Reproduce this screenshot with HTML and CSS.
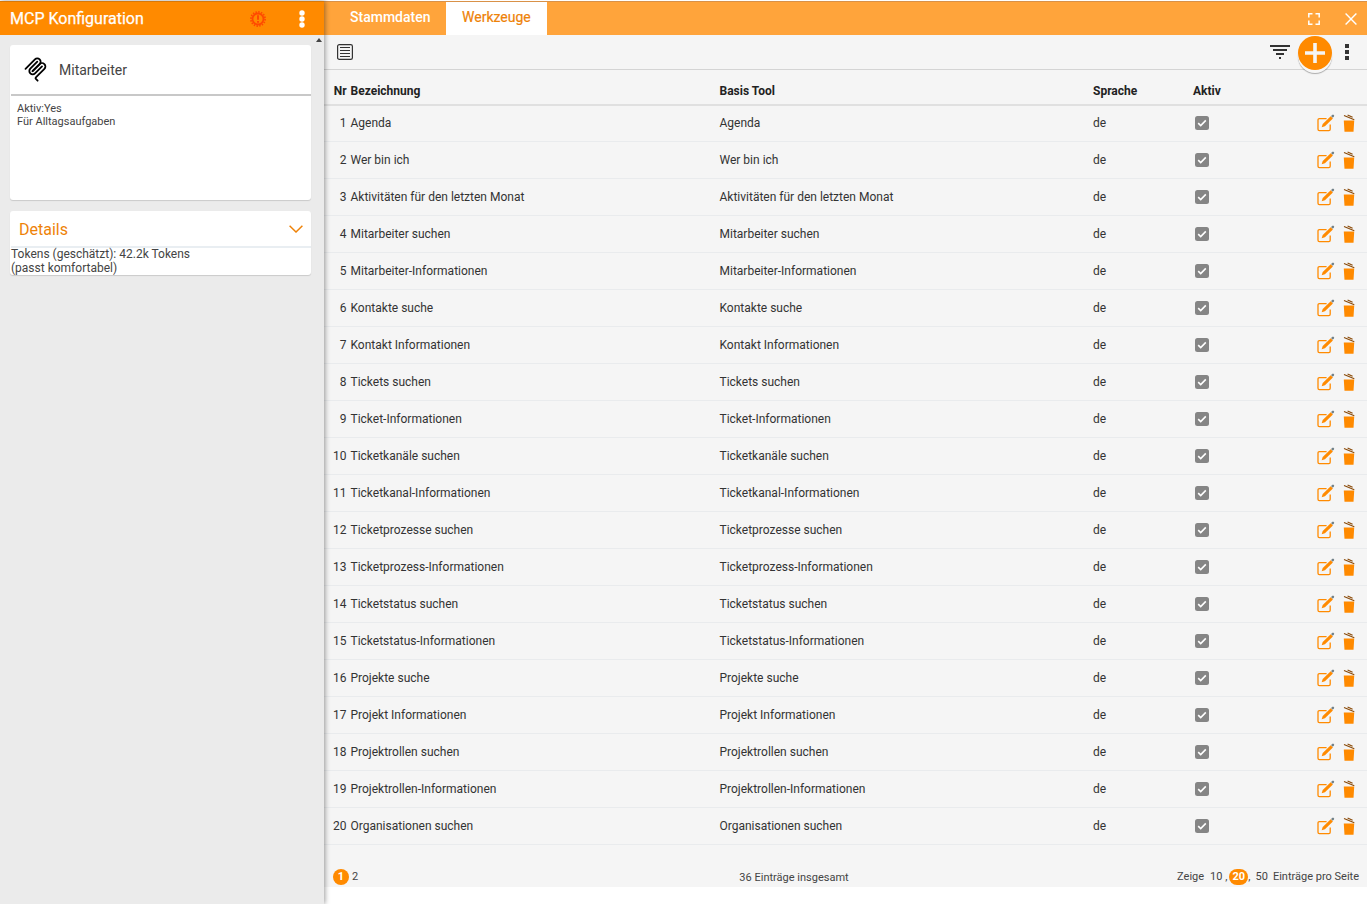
FILE: index.html
```html
<!DOCTYPE html>
<html lang="de">
<head>
<meta charset="utf-8">
<title>MCP Konfiguration</title>
<link rel="stylesheet" href="styles.css">
</head>
<body>
<svg class="defs" width="0" height="0">
  <symbol id="edit" viewBox="0 0 18 18">
    <path d="M9.6 4.6H2.4Q1 4.6 1 6v9.2q0 1.4 1.4 1.4h9.4q1.4 0 1.4-1.4V10.4" fill="none" stroke="#ff8a00" stroke-width="1.3"/>
    <path d="M4.7 13.2l1-3.2 8-7.7 2.2 2.2-8 7.7z" fill="#ff8a00"/>
    <path d="M14 2.1l1.2-1.2q.8-.6 1.6.1t.1 1.6l-1.2 1.2z" fill="#718087"/>
  </symbol>
  <symbol id="trash" viewBox="0 0 12 18">
    <path d="M.8 6.6h10.4l-.7 11.2h-9z" fill="#ff8a00"/>
    <path d="M1 1.4l10.3 4.4M4.6 1l5 2.2" fill="none" stroke="#8a4a08" stroke-width="1.1"/>
  </symbol>
  <symbol id="check" viewBox="0 0 14 14">
    <rect width="14" height="14" rx="2.5" fill="#858585"/>
    <path d="M3.2 7.2l2.5 2.4L10.8 4.4" fill="none" stroke="#fff" stroke-width="1.6"/>
  </symbol>
</svg>
<div class="app">
  <aside class="sidebar">
    <header class="side-head">
      <h1>MCP Konfiguration</h1>
      <svg class="alert" viewBox="0 0 16 16"><circle cx="8" cy="8" r="7.1" fill="none" stroke="#ff4a00" stroke-width="1.7" stroke-dasharray="1.5 1.288"/><circle cx="8" cy="8" r="5.5" fill="none" stroke="#ff4a00" stroke-width="1.8"/><path d="M8 4.2v4.6M8 10v1.7" stroke="#ff4a00" stroke-width="2"/></svg>
      <svg class="menu" viewBox="0 0 6 18" fill="#fff"><circle cx="3" cy="3" r="2.7"/><circle cx="3" cy="9" r="2.7"/><circle cx="3" cy="15" r="2.7"/></svg>
    </header>
    <div class="scroll-up"></div>
    <section class="card person">
      <div class="person-head">
        <svg viewBox="0 0 180 180" fill="none" stroke="#000" stroke-width="13" stroke-linecap="round"><path d="M18 84.85L85.88 16.97c9.37-9.37 24.57-9.37 33.94 0s9.37 24.57 0 33.94L68.56 102.18"/><path d="M69.27 101.47l50.55-50.56c9.37-9.37 24.57-9.37 33.94 0l.36.36c9.37 9.37 9.37 24.57 0 33.94L92.72 146.6c-3.12 3.12-3.12 8.19 0 11.31l12.61 12.61"/><path d="M102.85 33.94l-50.2 50.21c-9.37 9.37-9.37 24.56 0 33.94s24.57 9.37 33.94 0l50.2-50.21"/></svg>
        <span>Mitarbeiter</span>
      </div>
      <p class="person-text">Aktiv:Yes<br>Für Alltagsaufgaben</p>
    </section>
    <section class="card details">
      <div class="details-head"><h2>Details</h2>
        <svg viewBox="0 0 14 8" fill="none" stroke="#ee8208" stroke-width="1.5"><path d="M.6.8L7 7 13.4.8"/></svg>
      </div>
      <p class="details-text">Tokens (geschätzt): 42.2k Tokens<br>(passt komfortabel)</p>
    </section>
  </aside>
  <main class="main">
    <nav class="tabs">
      <span class="tab">Stammdaten</span><span class="tab active">Werkzeuge</span>
      <svg class="full" viewBox="0 0 12 12" fill="none" stroke="#fff" stroke-width="1.5"><path d="M.8 4.5V.8h3.7M7.5.8h3.7v3.7M11.2 7.5v3.7H7.5M4.5 11.2H.8V7.5"/></svg>
      <svg class="close" viewBox="0 0 12 12" stroke="#fff" stroke-width="1.4"><path d="M.6.6l10.8 10.8M11.4.6L.6 11.4"/></svg>
    </nav>
    <div class="toolbar">
      <svg class="list" viewBox="0 0 16 16" fill="none" stroke="#333"><rect x=".6" y=".6" width="14.8" height="14.8" rx="1.7" stroke-width="1.2"/><path d="M3 3.5h10M3 6.5h10M3 9.5h10M3 12.5h10"/></svg>
      <svg class="filter" viewBox="0 0 20 14" fill="#333"><path d="M0 0h20v2H0zM3 4h14v2H3zM6 8h8v2H6zM9 12h2v2H9z"/></svg>
      <button class="add"><svg viewBox="0 0 20 20"><path d="M8.2 0h3.6v8.2H20v3.6h-8.2V20H8.2v-8.2H0V8.2h8.2z" fill="#f5f5f5"/></svg></button>
      <svg class="more" viewBox="0 0 4 16" fill="#333"><path d="M0 0h4v4H0zM0 6h4v4H0zM0 12h4v4H0z"/></svg>
    </div>
    <div class="row head"><span class="nr">Nr</span><span>Bezeichnung</span><span>Basis Tool</span><span>Sprache</span><span>Aktiv</span></div>
    <div id="rows"></div>
    <footer class="footer">
      <div class="pages"><b class="dot">1</b><span class="page">2</span></div>
      <div class="total">36 Einträge insgesamt</div>
      <div class="sizes"><span class="show">Zeige</span><span class="ten">10 ,</span><b class="dot wide">20</b><span class="comma">,</span><span class="fifty">50</span><span>Einträge pro Seite</span></div>
    </footer>
  </main>
</div>
<script src="rows.js"></script>
</body>
</html>
```
FILE: rows.js
```js
const tools = ["Agenda", "Wer bin ich", "Aktivitäten für den letzten Monat", "Mitarbeiter suchen", "Mitarbeiter-Informationen", "Kontakte suche", "Kontakt Informationen", "Tickets suchen", "Ticket-Informationen", "Ticketkanäle suchen", "Ticketkanal-Informationen", "Ticketprozesse suchen", "Ticketprozess-Informationen", "Ticketstatus suchen", "Ticketstatus-Informationen", "Projekte suche", "Projekt Informationen", "Projektrollen suchen", "Projektrollen-Informationen", "Organisationen suchen"];
document.getElementById("rows").innerHTML = tools.map((name, i) =>
  `<div class="row"><span class="nr">${i + 1}</span><span>${name}</span><span>${name}</span><span>de</span>` +
  `<svg class="check"><use href="#check"/></svg><svg class="edit"><use href="#edit"/></svg><svg class="trash"><use href="#trash"/></svg></div>`
).join("");
```
FILE: styles.css
```css
* { box-sizing: border-box; }
body { margin: 0; background: #fff; font-family: Roboto, "Liberation Sans", sans-serif; font-size: 12px; color: #333; overflow: hidden; }
h1, h2, p { margin: 0; font-weight: 400; }
svg { display: block; flex: none; }
.defs { position: absolute; }
.app { display: flex; height: 904px; padding-top: 1px; }
.sidebar { width: 324px; flex: none; background: #ebebeb; box-shadow: 1px 0 5px rgba(0,0,0,.4); position: relative; z-index: 1; }
.side-head { height: 34px; background: #ff8a00; border-top: 1px solid #d87808; display: flex; align-items: center; padding: 0 19px 0 10px; color: #fff; }
.side-head h1 { font-size: 16px; flex: 1; -webkit-text-stroke: .25px #fff; }
.alert { width: 16px; height: 16px; margin: 1px 33px 0 0; }
.menu { width: 6px; height: 18px; margin-top: 1px; }
.scroll-up { position: absolute; left: 316px; top: 37px; border: 3px solid transparent; border-top: 0; border-bottom: 4px solid #444; }
.card { width: 301px; margin: 10px 0 0 10px; background: #fff; border-radius: 3px; box-shadow: 0 1px 1px rgba(0,0,0,.14); }
.person { height: 155px; }
.person-head { height: 51px; margin-left: 1px; border-bottom: 2px solid #c8c8c8; display: flex; align-items: center; padding-left: 12px; gap: 11px; font-size: 14px; color: #444; }
.person-head svg { width: 25px; height: 25px; }
.person-text { padding: 6px 7px; font-size: 11px; line-height: 13px; color: #444; }
.details { height: 64px; margin-top: 11px; }
.details-head { height: 37px; border-bottom: 2px solid #e9eef2; margin-left: 1px; padding: 0 8px; display: flex; justify-content: space-between; align-items: center; }
.details-head h2 { font-size: 16px; color: #ee8208; padding-top: 2px; }
.details-head svg { width: 14px; height: 8px; }
.details-text { padding-left: 1px; margin-top: -1px; line-height: 14px; color: #444; }
.main { flex: 1; min-width: 0; height: 886px; background: #f5f5f5; }
.tabs { height: 34px; background: #ffa43b; border-top: 1px solid #d99148; display: flex; align-items: center; color: #fff; font-size: 14px; padding-right: 10px; }
.tab { height: 33px; line-height: 31px; width: 122px; padding-left: 26px; font-weight: 500; }
.tab.active { width: 101px; padding-left: 16px; background: #fff; color: #ee8208; font-weight: 400; -webkit-text-stroke: .2px #ee8208; }
.full { width: 12px; height: 12px; margin: 0 25px 0 auto; }
.close { width: 12px; height: 12px; }
.toolbar { height: 35px; border-bottom: 1px solid #d4d4d4; display: flex; align-items: center; padding: 0 18px 0 13px; }
.list { width: 16px; height: 16px; }
.filter { width: 20px; height: 14px; margin: 0 8px 0 auto; }
.add { width: 34px; height: 34px; margin: 2px 13px 0 0; padding: 0; border: 0; border-radius: 50%; background: #ff8a00; display: grid; place-items: center; position: relative; box-shadow: 0 3px 0 #f7f7f7, 0 4px 1px rgba(0,0,0,.3); }
.add svg { width: 20px; height: 20px; }
.more { width: 4px; height: 16px; }
.row { height: 37px; display: grid; grid-template-columns: 22px 369px 373.5px 100px 124px 26px 12px; align-items: center; border-bottom: 1px solid #e9ebed; color: #333; }
.row span { white-space: nowrap; padding-left: 4.5px; }
.row .nr { padding: 0; text-align: right; margin-right: -.6px; }
.row.head { height: 36px; padding-top: 8px; border-bottom: 2px solid #e0e0e0; font-weight: 700; color: #222; }
.check { width: 14px; height: 14px; margin-left: 6px; }
.edit { width: 18px; height: 18px; margin-left: 4px; }
.trash { width: 12px; height: 18px; margin-left: 4px; }
#rows .row { padding-bottom: 1px; }
#rows .row:first-child { height: 36px; }
.footer { height: 42px; display: grid; grid-template-columns: 406px 240px 1fr; font-size: 11px; color: #444; padding: 23px 8px 0 9px; }
.footer { grid-template-columns: 341px 240px 1fr; }
.pages, .sizes { display: flex; align-items: center; height: 18px; }
.pages { gap: 3px; }
.page, .sizes > span { padding-bottom: 2px; }
.dot { width: 16px; height: 16px; border-radius: 8px; background: #ff8a00; color: #fff; line-height: 15px; text-align: center; }
.wide { width: 19px; }
.total { text-align: center; line-height: 19px; }
.sizes { justify-content: flex-end; white-space: nowrap; }
.show { margin-right: 6px; }
.fifty { margin-right: 5px; }
.ten { margin-right: 2px; }
.comma { margin-right: 5px; }
```
